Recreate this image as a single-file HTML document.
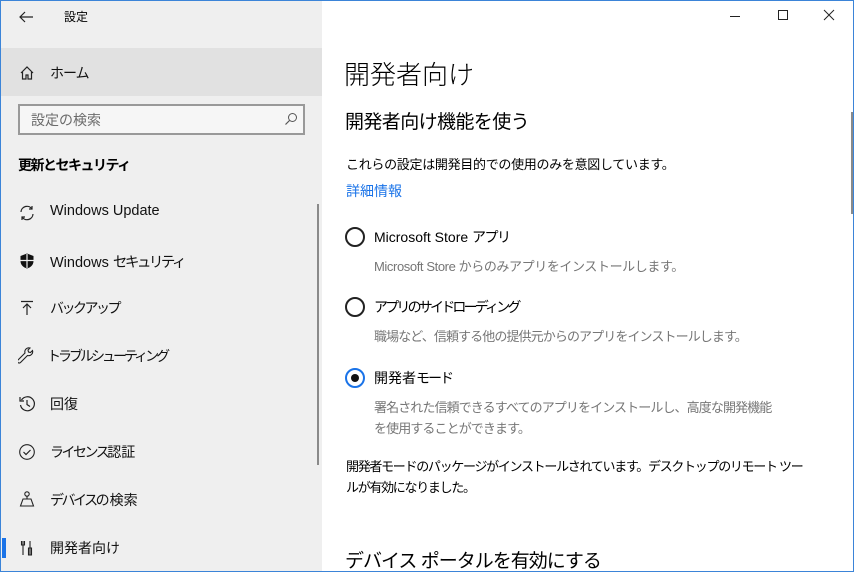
<!DOCTYPE html>
<html><head><meta charset="utf-8"><style>
*{margin:0;padding:0;box-sizing:border-box}
body{width:854px;height:572px;overflow:hidden;position:relative;background:#fff;font-family:"Liberation Sans","Noto Sans CJK JP",sans-serif;color:#000}
.a{position:absolute;white-space:nowrap}
#left{position:absolute;left:0;top:0;width:322px;height:572px;background:#efefef}
.nav{font-size:14px;color:#111}
.k{letter-spacing:-2.5px}
.ic{position:absolute;left:18px;width:18px;height:18px}
.sub{font-size:13px;color:#767676;letter-spacing:-0.9px}
.rb{position:absolute;left:345px;width:20px;height:20px;border:2px solid #222;border-radius:50%}
.bd{position:absolute;background:#3b84d8}
</style></head><body>
<div id="left">
  <div class="a" style="left:0;top:48px;width:322px;height:48px;background:#e1e1e1"></div>
  <svg class="a" style="left:18px;top:9px" width="16" height="16" viewBox="0 0 16 16"><path d="M15 8H2M7 3L2 8l5 5" fill="none" stroke="#222" stroke-width="1.2"/></svg>
  <div class="a" style="left:64px;top:8px;font-size:12px">設定</div>
  <svg class="a" style="left:19px;top:65px" width="16" height="16" viewBox="0 0 16 16"><path d="M2 8L8 2l6 6M3.5 7v7h3.5v-4h2v4h3.5V7" fill="none" stroke="#222" stroke-width="1.2"/></svg>
  <div class="a nav k" style="left:50px;top:63px;letter-spacing:-1px">ホーム</div>
  <div class="a" style="left:18px;top:104px;width:287px;height:31px;border:2px solid #999;background:#f6f6f6"></div>
  <div class="a" style="left:31px;top:110px;font-size:14px;color:#6b6b6b">設定の検索</div>
  <svg class="a" style="left:284px;top:112px" width="14" height="14" viewBox="0 0 14 14"><circle cx="8.5" cy="5.5" r="4" fill="none" stroke="#555" stroke-width="1"/><path d="M5.5 8.5L1.5 12.5" stroke="#555" stroke-width="1.2"/></svg>
  <div class="a" style="left:18px;top:155px;font-size:14px;font-weight:bold;letter-spacing:-1.5px">更新とセキュリティ</div>

  <svg class="ic" style="top:204px" viewBox="0 0 18 18"><path d="M3 8a6 6 0 0 1 11-3M15 10a6 6 0 0 1-11 3M14 2v3h-3M4 16v-3h3" fill="none" stroke="#222" stroke-width="1.2"/></svg>
  <div class="a nav" style="left:50px;top:203px;font-size:14.5px">Windows Update</div>
  <svg class="ic" style="top:252px" viewBox="0 0 18 18"><path d="M9 1.5L2.5 4v5c0 4 3 6.5 6.5 7.5 3.5-1 6.5-3.5 6.5-7.5V4z" fill="#111"/><path d="M9 2v14M2.5 8.5h13" stroke="#efefef" stroke-width="1.2"/></svg>
  <div class="a nav" style="left:50px;top:251px;font-size:14.5px">Windows <span class="k">セキュリティ</span></div>
  <svg class="ic" style="top:299px" viewBox="0 0 18 18"><path d="M3 2.5h12M9 16V5M5 9l4-4 4 4" fill="none" stroke="#222" stroke-width="1.2"/></svg>
  <div class="a nav k" style="left:50px;top:298px">バックアップ</div>
  <svg class="ic" style="top:347px" viewBox="0 0 18 18"><path d="M2.5 15.5l7-7a4 4 0 0 0 5-5l-2 2-2-.5-.5-2 2-2a4 4 0 0 0-5 5l-7 7a1.4 1.4 0 0 0 2.5 2.5z" fill="none" stroke="#222" stroke-width="1.1"/></svg>
  <div class="a nav k" style="left:47px;top:346px;letter-spacing:-3px">トラブルシューティング</div>
  <svg class="ic" style="top:395px" viewBox="0 0 18 18"><path d="M3.5 5a7 7 0 1 1-1 5M2 2v4h4M9 5v4.5l3 2" fill="none" stroke="#222" stroke-width="1.2"/></svg>
  <div class="a nav" style="left:50px;top:394px">回復</div>
  <svg class="ic" style="top:443px" viewBox="0 0 18 18"><circle cx="9" cy="9" r="7.3" fill="none" stroke="#222" stroke-width="1.1"/><path d="M5.5 9l2.5 2.5 4.5-4.5" fill="none" stroke="#222" stroke-width="1.2"/></svg>
  <div class="a nav" style="left:50px;top:442px"><span class="k">ライセンス</span>認証</div>
  <svg class="ic" style="top:490px" viewBox="0 0 18 18"><circle cx="9" cy="4" r="2.2" fill="none" stroke="#222" stroke-width="1.1"/><path d="M9 6v3M5 9h8l2.5 7h-13z" fill="none" stroke="#222" stroke-width="1.1"/></svg>
  <div class="a nav" style="left:50px;top:490px"><span class="k">デバイス</span>の検索</div>
  <div class="a" style="left:2px;top:538px;width:4px;height:20px;background:#1a73e8"></div>
  <svg class="ic" style="top:539px" viewBox="0 0 18 18"><path d="M5 2v14M3.5 2v4h3V2M12 2v14M10.5 9h3v7h-3z" fill="none" stroke="#222" stroke-width="1.1"/></svg>
  <div class="a nav" style="left:50px;top:538px">開発者向け</div>
  <div class="a" style="left:317px;top:204px;width:2px;height:261px;background:#8a8a8a"></div>
</div>

<svg class="a" style="left:729px;top:10px" width="12" height="12"><path d="M1 6.5h10" stroke="#222"/></svg>
<svg class="a" style="left:777px;top:9px" width="12" height="12"><rect x="1.5" y="1.5" width="9" height="9" fill="none" stroke="#222"/></svg>
<svg class="a" style="left:823px;top:9px" width="12" height="12"><path d="M1 1l10 10M11 1L1 11" stroke="#222"/></svg>
<div class="a" style="left:851px;top:112px;width:2px;height:102px;background:#8a8a8a"></div>

<div class="a" style="left:344px;top:55px;font-size:26px;font-weight:300">開発者向け</div>
<div class="a" style="left:345px;top:107px;font-size:19px;letter-spacing:-0.6px">開発者向け機能を使う</div>
<div class="a" style="left:346px;top:154px;font-size:13px;letter-spacing:-0.3px">これらの設定は開発目的での使用のみを意図しています。</div>
<div class="a" style="left:346px;top:181px;font-size:14px;color:#1a73e8">詳細情報</div>

<div class="rb" style="top:227px"></div>
<div class="a" style="left:374px;top:227px;font-size:14px">Microsoft Store <span class="k" style="letter-spacing:-1.5px">アプリ</span></div>
<div class="a sub" style="left:374px;top:256px;letter-spacing:-0.4px">Microsoft Store からのみアプリをインストールします。</div>
<div class="rb" style="top:297px"></div>
<div class="a k" style="left:374px;top:297px;font-size:14px;letter-spacing:-2.8px">アプリのサイドローディング</div>
<div class="a sub" style="left:374px;top:326px">職場など、信頼する他の提供元からのアプリをインストールします。</div>
<div class="rb" style="top:368px;border-color:#1a73e8"><div style="position:absolute;left:4px;top:4px;width:8px;height:8px;border-radius:50%;background:#111"></div></div>
<div class="a" style="left:374px;top:368px;font-size:14px">開発者<span class="k" style="letter-spacing:-2px">モード</span></div>
<div class="a sub" style="left:374px;top:397px;line-height:21px">署名された信頼できるすべてのアプリをインストールし、高度な開発機能<br>を使用することができます。</div>
<div class="a" style="left:346px;top:456px;font-size:13px;line-height:21px;letter-spacing:-1.3px">開発者モードのパッケージがインストールされています。デスクトップのリモート ツー<br>ルが有効になりました。</div>
<div class="a" style="left:345px;top:546px;font-size:19px;letter-spacing:-1px">デバイス ポータルを有効にする</div>

<div class="bd" style="left:0;top:0;width:854px;height:1px"></div>
<div class="bd" style="left:0;top:0;width:1px;height:572px"></div>
<div class="bd" style="right:0;top:0;width:1px;height:572px"></div>
<div class="bd" style="left:0;bottom:0;width:854px;height:1px"></div>
</body></html>
